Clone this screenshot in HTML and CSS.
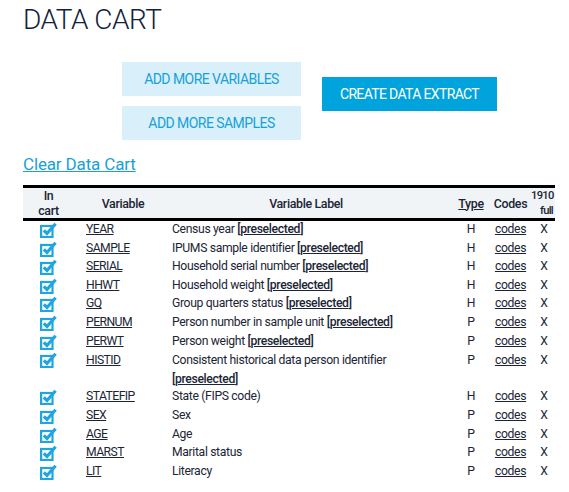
FILE: index.html
```html
<!DOCTYPE html>
<html>
<head>
<meta charset="utf-8">
<link rel="stylesheet" href="styles.css">
</head>
<body>
<div class="page">
  <h1 class="title">DATA CART</h1>
  <div class="actions">
    <div class="stack">
      <a class="btn btn-light" href="#">ADD MORE VARIABLES</a>
      <a class="btn btn-light" href="#">ADD MORE SAMPLES</a>
    </div>
    <a class="btn btn-primary" href="#">CREATE DATA EXTRACT</a>
  </div>
  <div class="clear-row"><a class="clear" href="#">Clear Data Cart</a></div>
  <table class="cart">
    <colgroup>
      <col class="c1"><col class="c2"><col class="c3"><col class="c4"><col class="c5"><col class="c6">
    </colgroup>
    <thead>
      <tr>
        <th class="h-cart">In<br>cart</th>
        <th class="h-var">Variable</th>
        <th class="h-label">Variable Label</th>
        <th class="h-type"><u>Type</u></th>
        <th class="h-codes">Codes</th>
        <th class="h-full">1910<br>full</th>
      </tr>
    </thead>
    <tbody>
      <tr><td class="chk"><svg class="box" viewBox="0 0 17 16"><rect x="1.1" y="4" width="11.4" height="11"/><path d="M3.8 8.4 L7 11.5 L15.6 1.8"/></svg></td><td class="var"><a href="#">YEAR</a></td><td class="label">Census year <b>[<u>preselected</u>]</b></td><td class="type">H</td><td class="codes"><a href="#">codes</a></td><td class="full">X</td></tr>
      <tr><td class="chk"><svg class="box" viewBox="0 0 17 16"><rect x="1.1" y="4" width="11.4" height="11"/><path d="M3.8 8.4 L7 11.5 L15.6 1.8"/></svg></td><td class="var"><a href="#">SAMPLE</a></td><td class="label">IPUMS sample identifier <b>[<u>preselected</u>]</b></td><td class="type">H</td><td class="codes"><a href="#">codes</a></td><td class="full">X</td></tr>
      <tr><td class="chk"><svg class="box" viewBox="0 0 17 16"><rect x="1.1" y="4" width="11.4" height="11"/><path d="M3.8 8.4 L7 11.5 L15.6 1.8"/></svg></td><td class="var"><a href="#">SERIAL</a></td><td class="label">Household serial number <b>[<u>preselected</u>]</b></td><td class="type">H</td><td class="codes"><a href="#">codes</a></td><td class="full">X</td></tr>
      <tr><td class="chk"><svg class="box" viewBox="0 0 17 16"><rect x="1.1" y="4" width="11.4" height="11"/><path d="M3.8 8.4 L7 11.5 L15.6 1.8"/></svg></td><td class="var"><a href="#">HHWT</a></td><td class="label">Household weight <b>[<u>preselected</u>]</b></td><td class="type">H</td><td class="codes"><a href="#">codes</a></td><td class="full">X</td></tr>
      <tr><td class="chk"><svg class="box" viewBox="0 0 17 16"><rect x="1.1" y="4" width="11.4" height="11"/><path d="M3.8 8.4 L7 11.5 L15.6 1.8"/></svg></td><td class="var"><a href="#">GQ</a></td><td class="label">Group quarters status <b>[<u>preselected</u>]</b></td><td class="type">H</td><td class="codes"><a href="#">codes</a></td><td class="full">X</td></tr>
      <tr><td class="chk"><svg class="box" viewBox="0 0 17 16"><rect x="1.1" y="4" width="11.4" height="11"/><path d="M3.8 8.4 L7 11.5 L15.6 1.8"/></svg></td><td class="var"><a href="#">PERNUM</a></td><td class="label">Person number in sample unit <b>[<u>preselected</u>]</b></td><td class="type">P</td><td class="codes"><a href="#">codes</a></td><td class="full">X</td></tr>
      <tr><td class="chk"><svg class="box" viewBox="0 0 17 16"><rect x="1.1" y="4" width="11.4" height="11"/><path d="M3.8 8.4 L7 11.5 L15.6 1.8"/></svg></td><td class="var"><a href="#">PERWT</a></td><td class="label">Person weight <b>[<u>preselected</u>]</b></td><td class="type">P</td><td class="codes"><a href="#">codes</a></td><td class="full">X</td></tr>
      <tr class="tall"><td class="chk"><svg class="box" viewBox="0 0 17 16"><rect x="1.1" y="4" width="11.4" height="11"/><path d="M3.8 8.4 L7 11.5 L15.6 1.8"/></svg></td><td class="var"><a href="#">HISTID</a></td><td class="label">Consistent historical data person identifier <b>[<u>preselected</u>]</b></td><td class="type">P</td><td class="codes"><a href="#">codes</a></td><td class="full">X</td></tr>
      <tr><td class="chk"><svg class="box" viewBox="0 0 17 16"><rect x="1.1" y="4" width="11.4" height="11"/><path d="M3.8 8.4 L7 11.5 L15.6 1.8"/></svg></td><td class="var"><a href="#">STATEFIP</a></td><td class="label">State (FIPS code)</td><td class="type">H</td><td class="codes"><a href="#">codes</a></td><td class="full">X</td></tr>
      <tr><td class="chk"><svg class="box" viewBox="0 0 17 16"><rect x="1.1" y="4" width="11.4" height="11"/><path d="M3.8 8.4 L7 11.5 L15.6 1.8"/></svg></td><td class="var"><a href="#">SEX</a></td><td class="label">Sex</td><td class="type">P</td><td class="codes"><a href="#">codes</a></td><td class="full">X</td></tr>
      <tr><td class="chk"><svg class="box" viewBox="0 0 17 16"><rect x="1.1" y="4" width="11.4" height="11"/><path d="M3.8 8.4 L7 11.5 L15.6 1.8"/></svg></td><td class="var"><a href="#">AGE</a></td><td class="label">Age</td><td class="type">P</td><td class="codes"><a href="#">codes</a></td><td class="full">X</td></tr>
      <tr><td class="chk"><svg class="box" viewBox="0 0 17 16"><rect x="1.1" y="4" width="11.4" height="11"/><path d="M3.8 8.4 L7 11.5 L15.6 1.8"/></svg></td><td class="var"><a href="#">MARST</a></td><td class="label">Marital status</td><td class="type">P</td><td class="codes"><a href="#">codes</a></td><td class="full">X</td></tr>
      <tr><td class="chk"><svg class="box" viewBox="0 0 17 16"><rect x="1.1" y="4" width="11.4" height="11"/><path d="M3.8 8.4 L7 11.5 L15.6 1.8"/></svg></td><td class="var"><a href="#">LIT</a></td><td class="label">Literacy</td><td class="type">P</td><td class="codes"><a href="#">codes</a></td><td class="full">X</td></tr>
    </tbody>
  </table>
</div>
</body>
</html>
```

FILE: styles.css
```css
body {
  margin: 0;
  background: #ffffff;
  font-family: Roboto, "Liberation Sans", sans-serif;
  color: #1b2535;
}

.page {
  padding: 3px 14px 0 23px;
}

.title {
  margin: 0;
  font-weight: 300;
  font-size: 28px;
  line-height: 34px;
  letter-spacing: -0.5px;
  color: #13223a;
}

.actions {
  display: flex;
  align-items: flex-start;
  margin: 25px 0 0 99px;
}

.stack {
  display: flex;
  flex-direction: column;
  gap: 10px;
}

.btn {
  display: flex;
  align-items: center;
  justify-content: center;
  height: 34px;
  font-size: 14px;
  letter-spacing: -0.55px;
  text-decoration: none;
}

.btn-light {
  width: 179px;
  background: #d9f0fa;
  color: #17a0d9;
}

.btn-primary {
  width: 175px;
  margin: 15px 0 0 21px;
  background: #00a3dc;
  color: #ffffff;
  letter-spacing: -0.65px;
}

.clear-row {
  margin-top: 13px;
  line-height: 22px;
}

.clear {
  font-size: 17px;
  letter-spacing: -0.15px;
  color: #1a9fd6;
  text-decoration: underline;
}

.cart {
  margin-top: 9px;
  width: 532px;
  table-layout: fixed;
  border-collapse: separate;
  border-spacing: 0;
  font-size: 12.2px;
  letter-spacing: -0.35px;
}

.c1 { width: 51px; }
.c2 { width: 92px; }
.c3 { width: 280px; }
.c4 { width: 44px; }
.c5 { width: 41px; }
.c6 { width: 24px; }

.cart th {
  background: #f1f4f6;
  border-top: 3px solid #000000;
  border-bottom: 3px solid #000000;
  padding: 0;
  font-size: 12.4px;
  line-height: 15px;
  font-weight: 500;
  text-align: center;
  vertical-align: middle;
}

.cart th.h-var { padding-left: 6px; }
.cart th.h-type { padding-left: 6px; }
.cart th.h-full {
  text-align: right;
  padding-right: 2px;
  font-size: 11.2px;
  letter-spacing: -0.7px;
  white-space: nowrap;
}

.cart td {
  padding: 0 0 1.6px;
  line-height: 17px;
  vertical-align: top;
}

.cart tr.tall td {
  line-height: 18.6px;
  padding-bottom: 0;
}

.cart a {
  color: #1b2535;
  text-decoration: underline;
}

.chk .box {
  display: block;
  width: 17px;
  height: 16px;
  margin: 1px auto 0;
  fill: none;
  stroke: #1fa5e0;
}

.chk .box rect { stroke-width: 2.2; }
.chk .box path { stroke-width: 3.2; }

.cart td.var { padding-left: 12px; letter-spacing: -0.55px; }
.cart td.label { padding-left: 6px; }
.cart td.type { text-align: center; padding-left: 6px; }
.cart td.codes { text-align: center; }
.cart td.full { text-align: center; padding-left: 2px; }

.label b { font-weight: 500; }
```
